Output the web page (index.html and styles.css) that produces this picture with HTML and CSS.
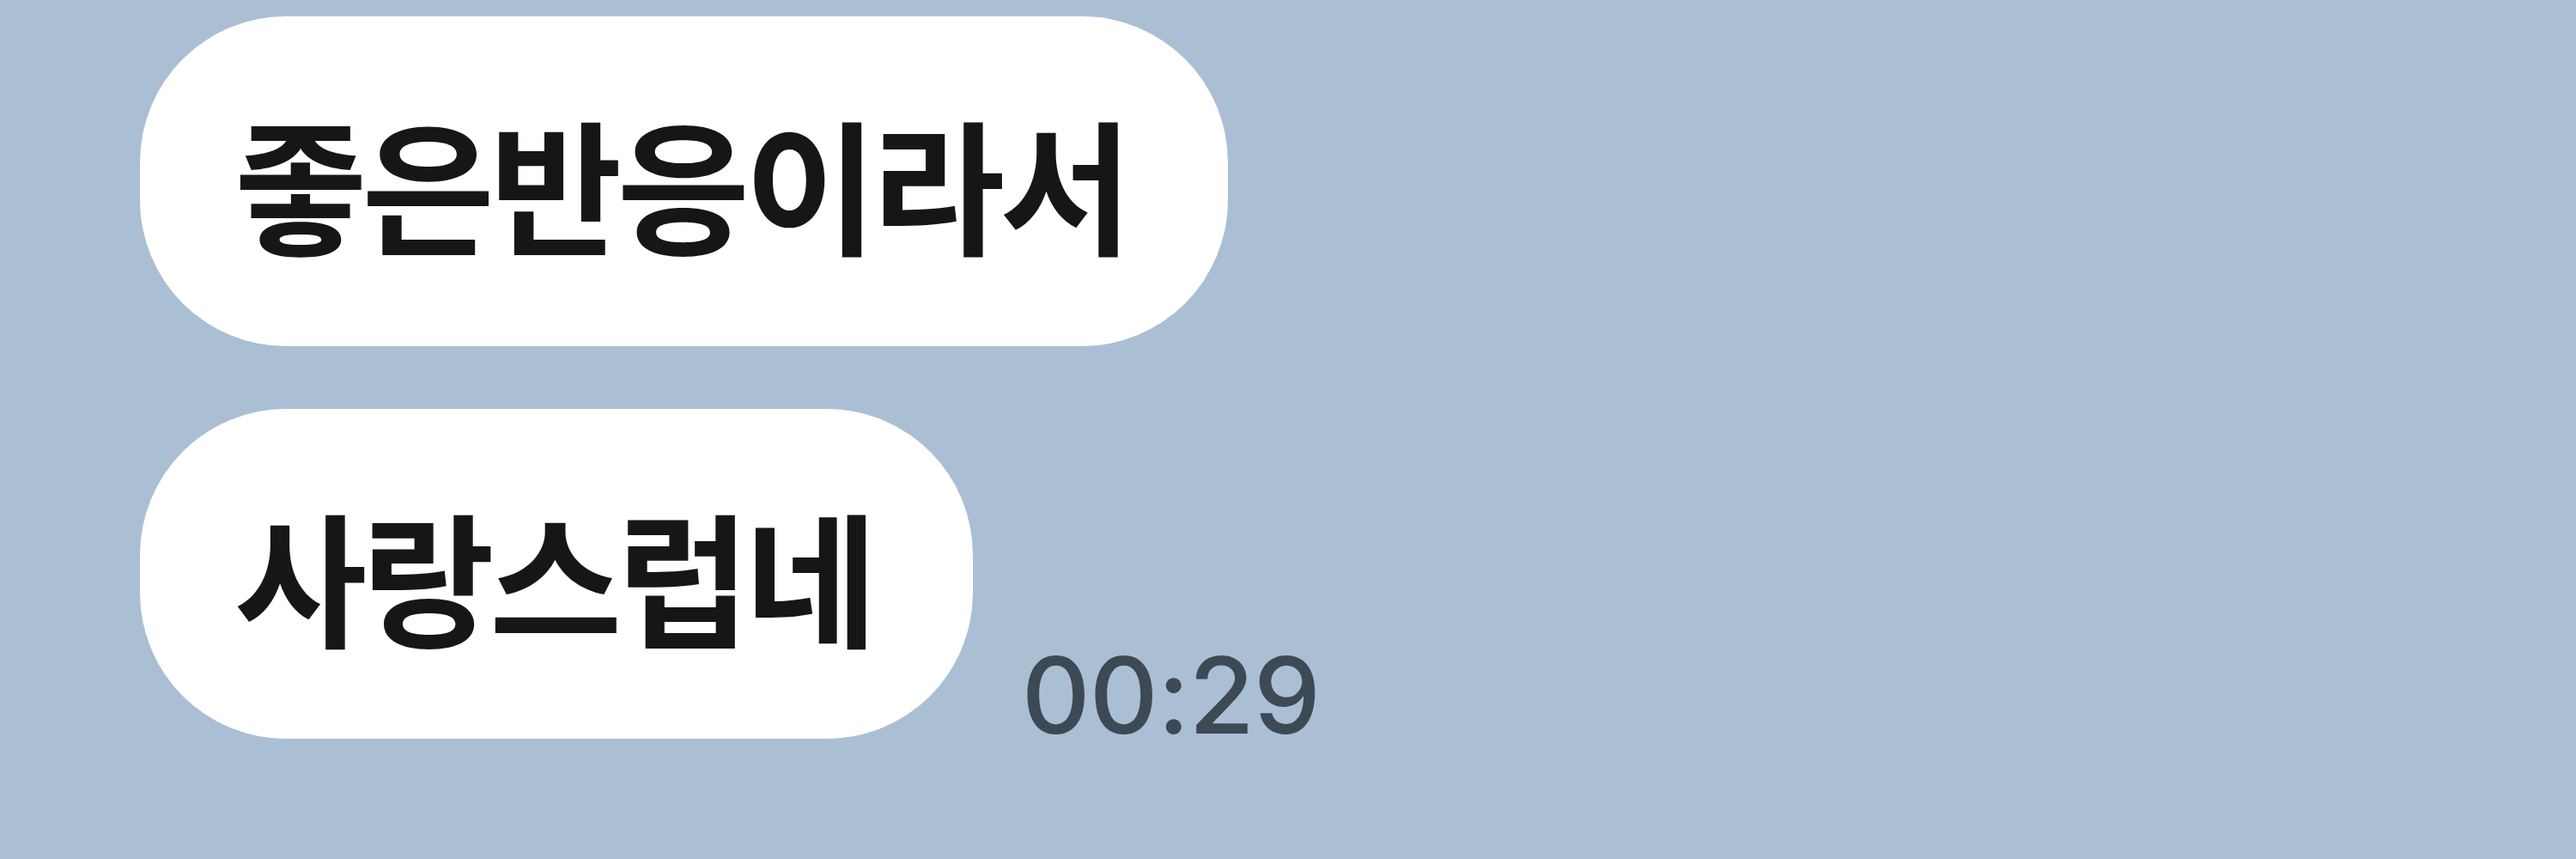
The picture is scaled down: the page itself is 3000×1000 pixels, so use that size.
FILE: index.html
```html
<!DOCTYPE html>
<html lang="ko">

<head>
    <meta charset="UTF-8">
    <meta name="viewport" content="width=device-width, initial-scale=1.0">
    <title>채팅</title>
    <link rel="stylesheet" href="styles.css">
</head>

<body>
    <div class="chat">
        <div class="row">
            <div class="bubble">좋은반응이라서</div>
        </div>
        <div class="row">
            <div class="bubble">사랑스럽네</div>
            <span class="time">00:29</span>
        </div>
    </div>
</body>

</html>
```

FILE: styles.css
```css
body {
    margin: 0;
    background-color: #aabfd3;
    font-family: "Noto Sans CJK KR", "Noto Sans", sans-serif;
}

.chat {
    display: flex;
    flex-direction: column;
    gap: 73px;
    padding: 19px 0 0 163px;
}

.row {
    display: flex;
    align-items: flex-end;
}

.bubble {
    background-color: #ffffff;
    color: #161616;
    font-size: 168px;
    font-weight: 600;
    letter-spacing: -6px;
    line-height: 200px;
    height: 200px;
    padding: 92px 117px 92px 110px;
    border-radius: 170px;
}

.time {
    margin-left: 57px;
    margin-bottom: -11px;
    font-family: Inter, "Liberation Sans", sans-serif;
    font-weight: 500;
    font-size: 124px;
    letter-spacing: -1px;
    line-height: 1;
    color: #3e4956;
}
```
